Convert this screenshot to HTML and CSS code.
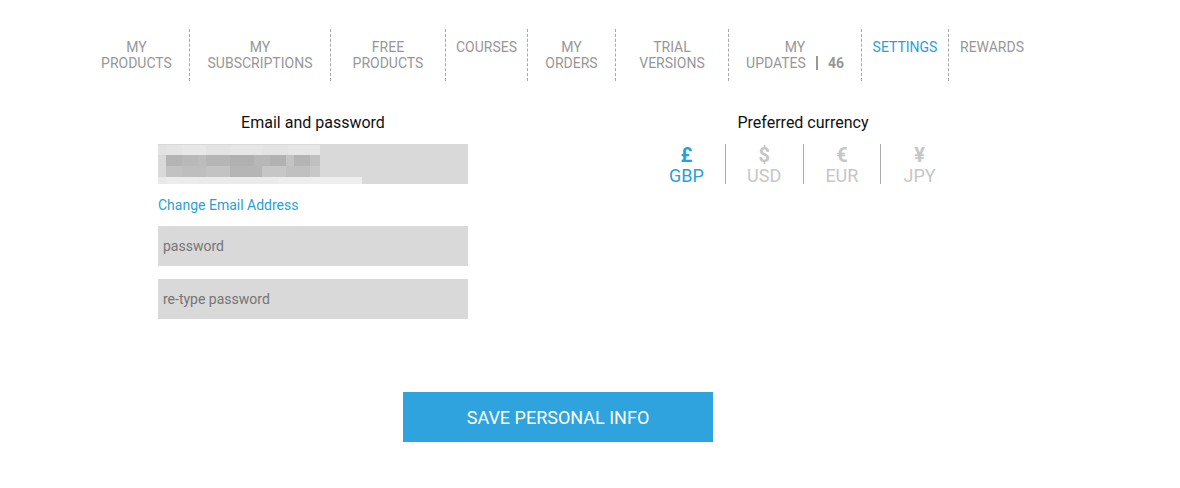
FILE: index.html
```html
<!DOCTYPE html>
<html lang="en">
<head>
  <meta charset="UTF-8" />
  <title>Settings</title>
  <link rel="stylesheet" href="styles.css">
</head>
<body>

  <!-- Account menu -->
  <nav class="account-nav">
    <a class="nav-item w-products" href="#">My<br>Products</a>
    <a class="nav-item w-subs" href="#">My<br>Subscriptions</a>
    <a class="nav-item w-free" href="#">Free<br>Products</a>
    <a class="nav-item w-courses" href="#">Courses</a>
    <a class="nav-item w-orders" href="#">My<br>Orders</a>
    <a class="nav-item w-trial" href="#">Trial<br>Versions</a>
    <a class="nav-item w-updates" href="#">My<br>Updates<span class="bar"></span><b>46</b></a>
    <a class="nav-item w-settings active" href="#">Settings</a>
    <a class="nav-item w-rewards" href="#">Rewards</a>
  </nav>

  <div class="settings">
    <div class="settings-columns">
      <div class="col">
        <div class="col-title">Email and password</div>
        <div class="field email-field" aria-label="Email (hidden)">
          <div class="blur-row row-a"></div>
          <div class="blur-row row-b"></div>
          <div class="blur-row row-c"></div>
          <div class="blur-row row-d"></div>
        </div>
        <a class="change-link" href="#">Change Email Address</a>
        <input class="field" type="password" placeholder="password" />
        <input class="field retype" type="password" placeholder="re-type password" />
      </div>

      <div class="col">
        <div class="col-title">Preferred currency</div>
        <div class="currency-list">
          <button class="currency active"><span class="symbol">£</span>GBP</button>
          <button class="currency"><span class="symbol">$</span>USD</button>
          <button class="currency"><span class="symbol">€</span>EUR</button>
          <button class="currency"><span class="symbol">¥</span>JPY</button>
        </div>
      </div>
    </div>

    <button class="save-btn">Save personal info</button>
  </div>

</body>
</html>
```

FILE: styles.css
```css
body {
  margin: 0;
  padding: 0;
  background: #fff;
  font-family: Roboto, 'Liberation Sans', Arial, sans-serif;
  color: #222;
}

/* Ylävalikko */
.account-nav {
  display: flex;
  margin: 29px 0 0 84px;
}

.nav-item {
  box-sizing: border-box;
  height: 52px;
  padding-top: 10px;
  border-right: 1px dashed #a8a8a8;
  color: #979797;
  font-size: 14px;
  line-height: 16px;
  text-transform: uppercase;
  text-align: center;
  text-decoration: none;
}

.nav-item:last-child {
  border-right: none;
}

.nav-item.active {
  color: #2a9fd9;
}

.w-products { width: 106px; }
.w-subs { width: 141px; }
.w-free { width: 115px; }
.w-courses { width: 82px; }
.w-orders { width: 88px; }
.w-trial { width: 113px; }
.w-updates { width: 133px; }
.w-settings { width: 87px; }
.w-rewards { width: 86px; }

.nav-item .bar {
  display: inline-block;
  width: 2px;
  height: 14px;
  background: #999;
  margin: 0 10px 0 10px;
  vertical-align: -2px;
}

.nav-item b {
  font-weight: 700;
}

/* Asetukset */
.settings {
  width: 800px;
  margin: 32px 0 0 158px;
}

.settings-columns {
  display: flex;
  gap: 180px;
}

.col {
  width: 310px;
  display: flex;
  flex-direction: column;
}

.col-title {
  font-size: 16px;
  line-height: 20px;
  text-align: center;
  color: #111;
  margin-bottom: 11px;
}

.field {
  box-sizing: border-box;
  width: 310px;
  height: 40px;
  border: none;
  outline: none;
  background: #d9d9d9;
  padding: 0 5px;
  font-family: Roboto, 'Liberation Sans', Arial, sans-serif;
  font-size: 14px;
  color: #444;
  margin: 0 0 13px 0;
}

.field::placeholder {
  color: #757575;
}

.email-field {
  padding: 1px 0 0 0;
  margin-bottom: 12px;
  display: flex;
  flex-direction: column;
}

/* piksellöity sähköposti */
.blur-row {
  height: 10px;
}

.row-a {
  width: 162px;
  background: linear-gradient(to right, #e2e2e2 0 8px, #e4e4e4 8px 24px, #e8e8e8 24px 48px, #e3e3e3 48px 72px, #e6e6e6 72px 104px, #e3e3e3 104px 130px, #e6e6e6 130px 162px);
}

.row-b {
  width: 154px;
  margin-left: 8px;
  height: 11px;
  background: linear-gradient(to right, #b4b4b4 0 16px, #b9b9b9 16px 32px, #bcbcbc 32px 40px, #b5b5b5 40px 64px, #b0b0b0 64px 88px, #b7b7b7 88px 104px, #b2b2b2 104px 120px, #c4c4c4 120px 128px, #b4b4b4 128px 144px, #c0c0c0 144px 154px);
}

.row-c {
  width: 154px;
  margin-left: 8px;
  height: 11px;
  background: linear-gradient(to right, #c2c2c2 0 16px, #bebebe 16px 40px, #c3c3c3 40px 64px, #b5b5b5 64px 96px, #c6c6c6 96px 120px, #c0c0c0 120px 144px, #c8c8c8 144px 154px);
}

.row-d {
  width: 204px;
  height: 7px;
  background: linear-gradient(to right, #e9e9e9 0 8px, #ececec 8px 40px, #ebebeb 40px 120px, #eeeeee 120px 204px);
}

.change-link {
  color: #2a9fd9;
  font-size: 14px;
  line-height: 18px;
  text-decoration: none;
  margin-bottom: 12px;
  align-self: flex-start;
}

.retype {
  margin-bottom: 0;
}

/* Valuutat */
.currency-list {
  display: flex;
}

.currency {
  flex: 1;
  display: flex;
  flex-direction: column;
  align-items: center;
  background: none;
  border: none;
  border-left: 1px solid #aaa;
  padding: 0;
  height: 40px;
  cursor: pointer;
  font-family: Roboto, 'Liberation Sans', Arial, sans-serif;
  font-size: 18px;
  font-weight: 400;
  line-height: 18px;
  color: #c6c6c6;
}

.currency:first-child {
  border-left: none;
}

.currency.active {
  color: #2a9fd9;
}

.currency .symbol {
  font-size: 20px;
  font-weight: 700;
  line-height: 23px;
}

.save-btn {
  display: block;
  width: 310px;
  height: 50px;
  margin: 73px auto 0 auto;
  background: #2ea3dd;
  border: none;
  color: #fff;
  font-family: Roboto, 'Liberation Sans', Arial, sans-serif;
  font-size: 18px;
  text-transform: uppercase;
  cursor: pointer;
}
```
